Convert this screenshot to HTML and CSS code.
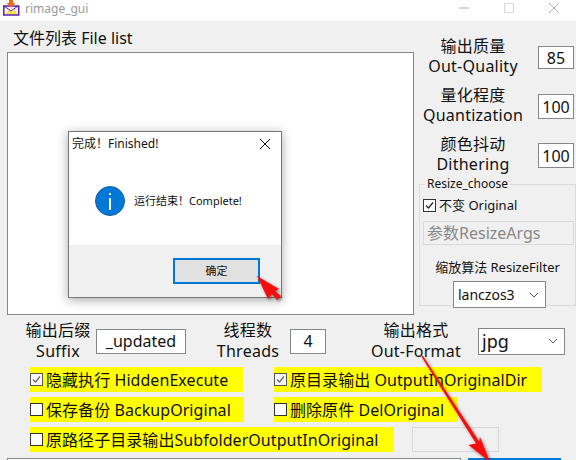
FILE: index.html
```html
<!DOCTYPE html>
<html lang="en">
<head>
  <meta charset="UTF-8"/>
  <title>rimage_gui</title>
  <link rel="stylesheet" href="styles.css">
</head>
<body>
  <header class="titlebar">
    <svg class="app-icon" viewBox="0 0 17 16" width="17" height="16">
      <rect x="0.750" y="6" width="15" height="9" fill="#f4f0ff" stroke="#5a1fb0" stroke-width="1.500"/>
      <path d="M3 14L6 10L9 12L12 9L14 14Z" fill="#f2e23a"/>
      <path d="M1 6L8 11L15 6" fill="none" stroke="#5a1fb0"/>
      <path d="M6 0H10V3H12.500L8 7.500L3.500 3H6Z" fill="#ef6a12"/>
    </svg>
    <span class="app-name">rimage_gui</span>
    <div class="window-buttons">
      <svg viewBox="0 0 10 10" width="10" height="10"><path d="M0 5H10" stroke="#b0b0b0"/></svg>
      <svg viewBox="0 0 10 10" width="10" height="10"><rect x="0.500" y="0.500" width="9" height="9" fill="none" stroke="#d8d8d8"/></svg>
      <svg viewBox="0 0 10 10" width="10" height="10"><path d="M0 0L10 10M10 0L0 10" stroke="#b0b0b0"/></svg>
    </div>
  </header>

  <div class="app">
    <div class="top">
      <section class="files">
        <div class="files-label">文件列表 File list</div>
        <div class="file-list"></div>
      </section>

      <aside class="options">
        <div class="option-row">
          <div class="caption">输出质量<br>Out-Quality</div>
          <div class="field field-quality">85</div>
        </div>
        <div class="option-row">
          <div class="caption">量化程度<br>Quantization</div>
          <div class="field">100</div>
        </div>
        <div class="option-row">
          <div class="caption">颜色抖动<br>Dithering</div>
          <div class="field">100</div>
        </div>

        <fieldset class="resize">
          <legend>Resize_choose</legend>
          <label class="resize-check">
            <span class="box"><svg viewBox="0 0 11 11" width="11" height="11"><path d="M2 5.500L4.500 8L9 2.500" fill="none" stroke="#222" stroke-width="1.200"/></svg></span>不变 Original
          </label>
          <div class="resize-args">参数ResizeArgs</div>
          <div class="filter-label">缩放算法 ResizeFilter</div>
          <div class="select select-filter">lanczos3
            <svg class="chevron" viewBox="0 0 10 6" width="10" height="6"><path d="M1 1L5 5L9 1" fill="none" stroke="#555"/></svg>
          </div>
        </fieldset>
      </aside>
    </div>

    <div class="output-row">
      <div class="caption caption-suffix">输出后缀<br>Suffix</div>
      <div class="field field-suffix">_updated</div>
      <div class="caption caption-threads">线程数<br>Threads</div>
      <div class="field field-threads">4</div>
      <div class="caption caption-format">输出格式<br>Out-Format</div>
      <div class="select select-format">jpg
        <svg class="chevron" viewBox="0 0 10 6" width="10" height="6"><path d="M1 1L5 5L9 1" fill="none" stroke="#555"/></svg>
      </div>
    </div>

    <div class="checks">
      <label class="check check-hidden">
        <span class="box grey"><svg viewBox="0 0 11 11" width="11" height="11"><path d="M2 5.500L4.500 8L9 2.500" fill="none" stroke="#666" stroke-width="1.200"/></svg></span>隐藏执行 HiddenExecute
      </label>
      <label class="check check-origdir">
        <span class="box grey"><svg viewBox="0 0 11 11" width="11" height="11"><path d="M2 5.500L4.500 8L9 2.500" fill="none" stroke="#666" stroke-width="1.200"/></svg></span>原目录输出 OutputInOriginalDir
      </label>
      <label class="check check-backup"><span class="box"></span>保存备份 BackupOriginal</label>
      <label class="check check-del"><span class="box"></span>删除原件 DelOriginal</label>
    </div>
    <div class="sub-row">
      <label class="check check-sub"><span class="box"></span>原路径子目录输出SubfolderOutputInOriginal</label>
      <div class="blank-btn"></div>
    </div>

    <div class="bottom-row">
      <div class="path-box"></div>
      <div class="run-btn"></div>
    </div>
  </div>

  <!-- message box over the window -->
  <div class="dialog">
    <div class="dialog-title">
      <span>完成！Finished!</span>
      <svg viewBox="0 0 10 10" width="10" height="10"><path d="M0 0L10 10M10 0L0 10" stroke="#111"/></svg>
    </div>
    <div class="dialog-body">
      <svg class="info-icon" viewBox="0 0 30 30" width="30" height="30">
        <circle cx="15" cy="15" r="14.500" fill="#0078d7" stroke="#1a5f9e"/>
        <rect x="14" y="12" width="2" height="12" fill="#fff"/>
        <rect x="14" y="7" width="2" height="2" fill="#fff"/>
      </svg>
      <span>运行结束！Complete!</span>
    </div>
    <div class="dialog-footer">
      <div class="ok-btn">确定</div>
    </div>
  </div>

  <!-- red annotation arrows -->
  <svg class="arrows" viewBox="0 0 576 460" width="576" height="460">
    <defs>
      <filter id="arrow-shadow" x="-30%" y="-30%" width="160%" height="160%">
        <feDropShadow dx="1.500" dy="1.500" stdDeviation="1.500" flood-color="#000" flood-opacity="0.500"/>
      </filter>
    </defs>
    <g filter="url(#arrow-shadow)" fill="#f50a0a">
      <path d="M257 276L279 289L275 291L281 296L277 300L272 294L268 299Z"/>
      <path d="M421.400 356.400L422.600 355.600L479.100 441.500L480 437L490 462L468.500 445L476.100 443.500Z"/>
    </g>
  </svg>
</body>
</html>
```

FILE: styles.css
```css
*, *::before, *::after {
  box-sizing: border-box;
}
html, body {
  height: 460px;
  overflow: hidden;
}
body {
  margin: 0;
  position: relative;
  background: #f0f0f0;
  color: #111;
  font-family: "Noto Sans", "Noto Sans CJK SC", sans-serif;
  font-size: 16px;
  line-height: 20px;
}

.titlebar {
  display: flex;
  align-items: flex-start;
  height: 21px;
  background: #fff;
  overflow: hidden;
}
.app-icon {
  margin: 0 0 0 3px;
}
.app-name {
  margin-left: 5px;
  font-size: 12px;
  line-height: 17px;
  color: #999;
}
.window-buttons {
  display: flex;
  gap: 35px;
  margin-left: auto;
  padding: 3px 17px 0 0;
}

.top {
  display: flex;
  height: 294px;
}
.files {
  width: 414px;
  padding-left: 7px;
}
.files-label {
  height: 31px;
  padding: 6px 0 0 6px;
  line-height: 22px;
}
.file-list {
  width: 407px;
  height: 263px;
  background: #fff;
  border: 1px solid #82878c;
}

.options {
  flex: 1;
  padding-top: 12px;
}
.option-row {
  display: flex;
  align-items: center;
  height: 49px;
}
.caption {
  text-align: center;
  white-space: nowrap;
  letter-spacing: 0.250px;
}
.option-row .caption {
  width: 118px;
  margin-right: 6px;
  padding-bottom: 3px;
}
.field {
  display: flex;
  align-items: center;
  justify-content: center;
  width: 36px;
  height: 25px;
  background: #fff;
  border: 1px solid #82878c;
}
.field-quality {
  height: 23px;
}

.resize {
  width: 157px;
  height: 129px;
  margin: -3px 0 0 5px;
  padding: 0;
  border: 1px solid #dcdcdc;
  font-size: 13px;
}
.resize legend {
  margin-left: 5px;
  padding: 0 2px;
  font-size: 12px;
  line-height: 14px;
}
.resize-check {
  display: flex;
  align-items: center;
  gap: 3px;
  height: 20px;
  margin: 4px 0 0 3px;
}
.resize-args {
  width: 151px;
  height: 24px;
  margin: 6px 0 0 3px;
  padding-left: 3px;
  background: #f0f0f0;
  border: 1px solid #d9d9d9;
  color: #888;
  font-size: 16px;
  line-height: 22px;
}
.filter-label {
  margin-top: 12px;
  text-align: center;
  font-size: 13px;
  line-height: 20px;
}
.select {
  display: flex;
  align-items: center;
  background: #fff;
  border: 1px solid #82878c;
  padding-left: 3px;
}
.select-filter {
  width: 93px;
  height: 27px;
  margin: 4px 0 0 33px;
  font-size: 14px;
  padding-left: 4px;
}
.chevron {
  margin-left: auto;
  margin-right: 6px;
}

.box {
  display: inline-flex;
  align-items: center;
  justify-content: center;
  flex: none;
  width: 13px;
  height: 13px;
  background: #fff;
  border: 1px solid #333;
}
.box.grey {
  border-color: #555;
  background: #f6f6f6;
}

.output-row {
  display: flex;
  align-items: center;
  height: 44px;
  margin-top: 4px;
}
.output-row .caption {
  line-height: 21px;
}
.caption-suffix {
  width: 76px;
  margin-left: 20px;
}
.field-suffix {
  width: 90px;
}
.caption-threads {
  width: 64px;
  margin-left: 30px;
}
.field-threads {
  margin-left: 10px;
}
.caption-format {
  width: 92px;
  margin-left: 44px;
}
.select-format {
  width: 87px;
  height: 27px;
  margin-left: 16px;
  font-size: 18px;
}

.checks {
  display: grid;
  grid-template-columns: 244px auto;
  justify-content: start;
  row-gap: 5px;
  margin: 4px 0 0 30px;
}
.check {
  display: flex;
  align-items: center;
  gap: 3px;
  height: 25px;
  background: #ff0;
  white-space: nowrap;
  justify-self: start;
  letter-spacing: 0.060px;
}
.check-hidden { width: 213px; }
.check-backup { width: 214px; }
.check-origdir { width: 268px; }
.check-del { width: 184px; }

.sub-row {
  display: flex;
  gap: 18px;
  margin: 5px 0 0 30px;
}
.check-sub {
  width: 364px;
}
.blank-btn {
  width: 87px;
  height: 25px;
  border: 1px solid #d9d9d9;
}

.bottom-row {
  display: flex;
  gap: 7px;
  margin: 6px 0 0 7px;
}
.path-box {
  width: 454px;
  height: 20px;
  border: 1px solid #82878c;
  background: #fff;
}
.run-btn {
  width: 93px;
  height: 20px;
  border: 2px solid #0078d7;
  background: #e1e1e1;
}

/* message box */
.dialog {
  position: absolute;
  left: 68px;
  top: 131px;
  width: 214px;
  height: 167px;
  display: flex;
  flex-direction: column;
  background: #fff;
  border: 1px solid #777;
  box-shadow: 0 2px 10px rgba(0,0,0,0.35);
  font-size: 12px;
}
.dialog-title {
  display: flex;
  align-items: center;
  justify-content: space-between;
  height: 23px;
  padding: 0 11px 0 3px;
}
.dialog-body {
  display: flex;
  align-items: center;
  gap: 9px;
  height: 90px;
  padding: 2px 0 0 26px;
  font-size: 11px;
}
.dialog-footer {
  flex: 1;
  display: flex;
  justify-content: flex-end;
  padding: 13px 21px 0 0;
  background: #f0f0f0;
}
.ok-btn {
  width: 87px;
  height: 26px;
  border: 2px solid #0078d7;
  background: #e1e1e1;
  text-align: center;
  font-size: 11px;
  line-height: 22px;
}

.arrows {
  position: absolute;
  left: 0;
  top: 0;
  pointer-events: none;
}
```
